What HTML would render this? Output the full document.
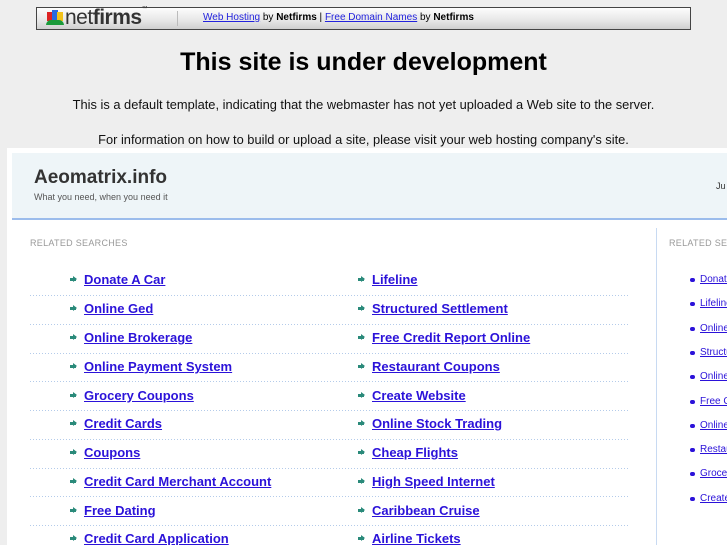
<!DOCTYPE html>
<html><head><meta charset="utf-8"><style>
*{margin:0;padding:0;box-sizing:border-box}
html,body{width:727px;height:545px;overflow:hidden}
body{background:#eeeeee;font-family:"Liberation Sans",sans-serif;position:relative;color:#000}
#wrap{position:absolute;left:0;top:0;width:727px;height:545px;overflow:hidden}
.a{position:absolute}
#bar{left:36px;top:7px;width:655px;height:23px;border:1px solid #444;background:linear-gradient(#fdfdfd,#e6e6e6 60%,#cfcfcf)}
#bar .sep{position:absolute;left:140px;top:3px;width:1px;height:15px;background:#bbb}
#bar .t{position:absolute;left:166px;top:4px;font-size:10px}
#bar .t a{color:#2222dd;text-decoration:underline}
h1{position:absolute;left:0;width:727px;top:48px;text-align:center;font-size:25px;font-weight:bold}
.p{position:absolute;left:0;width:727px;text-align:center;font-size:12.85px;color:#111}
#frame{left:7px;top:148px;width:720px;height:397px;background:#fff}
#hdr{left:12px;top:153px;width:715px;height:67px;background:#eef5f8;border-bottom:2px solid #9bbcec;overflow:hidden}
.l{position:absolute;font-size:13px;font-weight:bold;color:#2b12d9;text-decoration:underline;white-space:nowrap}
.l:before{content:"";position:absolute;left:-14px;top:6px;width:6px;height:3px;background:#2a8a7a}
.l:after{content:"";position:absolute;left:-11px;top:4px;border-left:4px solid #2a8a7a;border-top:3.5px solid transparent;border-bottom:3.5px solid transparent}
.dl{position:absolute;left:30px;width:598px;height:1px;background-image:linear-gradient(90deg,#b4cbea 1px,transparent 1px);background-size:3px 1px}
.r{position:absolute;left:700px;font-size:10px;color:#2b12d9;text-decoration:underline;white-space:nowrap}
.r:before{content:"";position:absolute;left:-10px;top:4px;width:5px;height:4px;border-radius:2px;background:#2b12d9}
.rs{position:absolute;top:238px;font-size:9px;color:#999;letter-spacing:0.3px;white-space:nowrap}
</style></head><body><div id="wrap">
<div id="bar" class="a">
 <div class="a" style="left:10px;top:4px;width:7px;height:9px;background:#d22"></div>
 <div class="a" style="left:15px;top:2px;width:6px;height:10px;background:#2a6adf"></div>
 <div class="a" style="left:20px;top:4px;width:6px;height:9px;background:#f2c21a"></div>
 <div class="a" style="left:9px;top:12px;width:18px;height:5px;border-radius:5px 5px 0 0;background:#1a9a3a"></div>
 <div class="a" style="left:28px;top:-2px;font-size:21px;color:#333;letter-spacing:-0.5px;white-space:nowrap">net<b>firms</b><span style="font-size:6px;vertical-align:top">™</span></div>
 <div class="sep"></div>
 <div class="t"><a>Web Hosting</a> by <b>Netfirms</b> | <a>Free Domain Names</a> by <b>Netfirms</b></div>
</div>
<h1>This site is under development</h1>
<div class="p" style="top:97px">This is a default template, indicating that the webmaster has not yet uploaded a Web site to the server.</div>
<div class="p" style="top:132px">For information on how to build or upload a site, please visit your web hosting company's site.</div>
<div id="frame" class="a"></div>
<div id="hdr" class="a">
 <div class="a" style="left:22px;top:14px;font-size:19px;font-weight:bold;color:#333">Aeomatrix.info</div>
 <div class="a" style="left:22px;top:39px;font-size:9px;color:#555">What you need, when you need it</div>
 <div class="a" style="left:704px;top:28px;font-size:9px;color:#333">Ju</div>
</div>
<div class="rs" style="left:30px">RELATED SEARCHES</div>
<div class="rs" style="left:669px">RELATED SEARCHES</div>
<div class="a" style="left:656px;top:228px;width:1px;height:317px;background:#c8daf2"></div>

<div class="l" style="left:84px;top:272px">Donate A Car</div>
<div class="l" style="left:84px;top:301px">Online Ged</div>
<div class="l" style="left:84px;top:330px">Online Brokerage</div>
<div class="l" style="left:84px;top:359px">Online Payment System</div>
<div class="l" style="left:84px;top:388px">Grocery Coupons</div>
<div class="l" style="left:84px;top:416px">Credit Cards</div>
<div class="l" style="left:84px;top:445px">Coupons</div>
<div class="l" style="left:84px;top:474px">Credit Card Merchant Account</div>
<div class="l" style="left:84px;top:503px">Free Dating</div>
<div class="l" style="left:84px;top:531px">Credit Card Application</div>

<div class="l" style="left:372px;top:272px">Lifeline</div>
<div class="l" style="left:372px;top:301px">Structured Settlement</div>
<div class="l" style="left:372px;top:330px">Free Credit Report Online</div>
<div class="l" style="left:372px;top:359px">Restaurant Coupons</div>
<div class="l" style="left:372px;top:388px">Create Website</div>
<div class="l" style="left:372px;top:416px">Online Stock Trading</div>
<div class="l" style="left:372px;top:445px">Cheap Flights</div>
<div class="l" style="left:372px;top:474px">High Speed Internet</div>
<div class="l" style="left:372px;top:503px">Caribbean Cruise</div>
<div class="l" style="left:372px;top:531px">Airline Tickets</div>

<div class="dl" style="top:295px"></div>
<div class="dl" style="top:324px"></div>
<div class="dl" style="top:353px"></div>
<div class="dl" style="top:381px"></div>
<div class="dl" style="top:410px"></div>
<div class="dl" style="top:439px"></div>
<div class="dl" style="top:468px"></div>
<div class="dl" style="top:496px"></div>
<div class="dl" style="top:525px"></div>

<div class="r" style="top:274px">Donate A Car</div>
<div class="r" style="top:298px">Lifeline</div>
<div class="r" style="top:323px">Online Ged</div>
<div class="r" style="top:347px">Structured Settlement</div>
<div class="r" style="top:371px">Online Brokerage</div>
<div class="r" style="top:396px">Free Credit Report</div>
<div class="r" style="top:420px">Online Payment</div>
<div class="r" style="top:444px">Restaurant Coupons</div>
<div class="r" style="top:468px">Grocery Coupons</div>
<div class="r" style="top:493px">Create Website</div>
</div></body></html>
